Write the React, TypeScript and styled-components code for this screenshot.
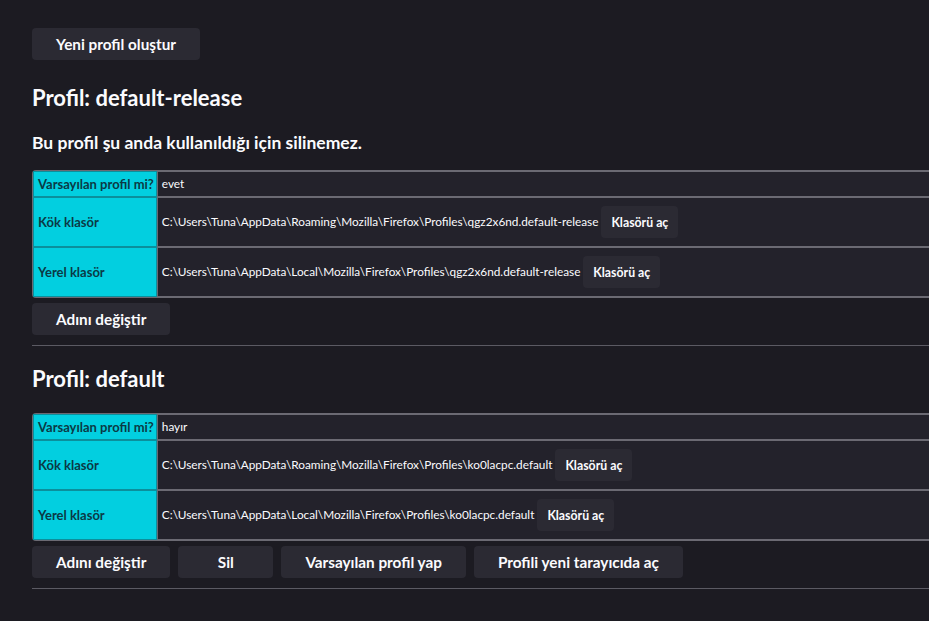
import React from "react";
import styled, { createGlobalStyle } from "styled-components";

const GlobalStyle = createGlobalStyle`
  html, body {
    margin: 0;
    padding: 0;
    background: #1c1b22;
    overflow: hidden;
  }
  body {
    font-family: Lato, "Noto Sans", sans-serif;
    color: #fbfbfe;
  }
`;

const Page = styled.div`
  padding: 28px 0 0 32px;
`;

const Button = styled.button<{ $small?: boolean }>`
  height: 32px;
  min-width: ${(p) => (p.$small ? "0" : "95px")};
  padding: 0 ${(p) => (p.$small ? "10px" : "24px")};
  border: none;
  border-radius: 4px;
  background: #2b2a33;
  color: #fbfbfe;
  font-family: inherit;
  font-size: ${(p) => (p.$small ? "12.3px" : "15.3px")};
  font-weight: 700;
  white-space: nowrap;
  cursor: pointer;
`;

const Heading = styled.h2<{ $first?: boolean }>`
  margin: ${(p) => (p.$first ? "23px" : "18px")} 0 0;
  font-size: 22px;
  line-height: 30px;
  font-weight: 700;
`;

const Notice = styled.p`
  margin: 19px 0 0;
  font-size: 17.5px;
  line-height: 22px;
  font-weight: 700;
`;

const Table = styled.table<{ $gap: number }>`
  width: 100%;
  margin-top: ${(p) => p.$gap}px;
  border: 1px solid #6b6a73;
  border-right: none;
  border-radius: 4px 0 0 4px;
  border-spacing: 0;
  background: #23222b;
  font-size: 11.8px;
  line-height: 16px;
`;

const HeaderCell = styled.th`
  width: 115px;
  padding: 4px 2px 4px 4px;
  background: #02cfe0;
  color: #0b3a45;
  border: 1px solid #0b8f9c;
  text-align: left;
  font-size: 13px;
  font-weight: 700;
  white-space: nowrap;
`;

const DataCell = styled.td`
  padding: 4px;
  border: 1px solid #6b6a73;
  border-right: none;
  white-space: nowrap;
`;

const PathLine = styled.div`
  display: flex;
  align-items: center;
  gap: 3px;
  margin: 4px 0;
`;

const Actions = styled.div`
  display: flex;
  gap: 8px;
  margin-top: 5px;
`;

const Rule = styled.hr`
  margin: 10px 0 0;
  border: none;
  border-top: 1px solid #5b5a63;
`;

type Profile = {
  name: string;
  isDefault: boolean;
  rootDir: string;
  localDir: string;
  inUse: boolean;
};

const profiles: Profile[] = [
  {
    name: "default-release",
    isDefault: true,
    rootDir:
      "C:\\Users\\Tuna\\AppData\\Roaming\\Mozilla\\Firefox\\Profiles\\qgz2x6nd.default-release",
    localDir:
      "C:\\Users\\Tuna\\AppData\\Local\\Mozilla\\Firefox\\Profiles\\qgz2x6nd.default-release",
    inUse: true,
  },
  {
    name: "default",
    isDefault: false,
    rootDir:
      "C:\\Users\\Tuna\\AppData\\Roaming\\Mozilla\\Firefox\\Profiles\\ko0lacpc.default",
    localDir:
      "C:\\Users\\Tuna\\AppData\\Local\\Mozilla\\Firefox\\Profiles\\ko0lacpc.default",
    inUse: false,
  },
];

const DirRow = ({ label, path }: { label: string; path: string }) => (
  <tr>
    <HeaderCell>{label}</HeaderCell>
    <DataCell>
      <PathLine>
        <span>{path}</span>
        <Button $small>Klasörü aç</Button>
      </PathLine>
    </DataCell>
  </tr>
);

const ProfileSection = ({
  profile,
  first,
}: {
  profile: Profile;
  first: boolean;
}) => (
  <section>
    <Heading $first={first}>Profil: {profile.name}</Heading>
    {profile.inUse && (
      <Notice>Bu profil şu anda kullanıldığı için silinemez.</Notice>
    )}
    <Table $gap={profile.inUse ? 16 : 19}>
      <tbody>
        <tr>
          <HeaderCell>Varsayılan profil mi?</HeaderCell>
          <DataCell>{profile.isDefault ? "evet" : "hayır"}</DataCell>
        </tr>
        <DirRow label="Kök klasör" path={profile.rootDir} />
        <DirRow label="Yerel klasör" path={profile.localDir} />
      </tbody>
    </Table>
    <Actions>
      <Button>Adını değiştir</Button>
      {!profile.inUse && <Button>Sil</Button>}
      {!profile.isDefault && <Button>Varsayılan profil yap</Button>}
      {!profile.inUse && <Button>Profili yeni tarayıcıda aç</Button>}
    </Actions>
    <Rule />
  </section>
);

export default function App() {
  return (
    <Page>
      <GlobalStyle />
      <Button>Yeni profil oluştur</Button>
      {profiles.map((p, i) => (
        <ProfileSection key={p.name} profile={p} first={i === 0} />
      ))}
    </Page>
  );
}
